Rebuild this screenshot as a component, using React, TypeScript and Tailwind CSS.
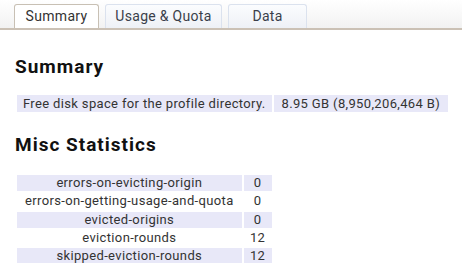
const stats = [
  { name: "errors-on-evicting-origin", value: "0" },
  { name: "errors-on-getting-usage-and-quota", value: "0" },
  { name: "evicted-origins", value: "0" },
  { name: "eviction-rounds", value: "12" },
  { name: "skipped-eviction-rounds", value: "12" },
];

const Tab = ({ label, active, width }: { label: string; active?: boolean; width: string }) => {
  return (
    <div
      className={
        "flex h-[24px] items-center justify-center rounded-t-[3px] border border-b-0 text-[14px] tracking-[0.3px] " +
        width +
        (active
          ? " border-[#c8c0b4] bg-white text-[#333]"
          : " border-[#dbe2ee] bg-gradient-to-b from-[#fbfcfe] to-[#eef1f6] text-[#3a3f4a]")
      }
    >
      {label}
    </div>
  );
};

export default function App() {
  return (
    <div
      className="h-[263px] w-[462px] overflow-hidden bg-white text-[#222]"
      style={{ fontFamily: "Roboto, 'Liberation Sans', sans-serif" }}
    >
      <div className="flex h-[30px] items-end gap-[6px] border-b-2 border-[#cbc1b5] bg-gradient-to-b from-white to-[#f2f2f2] pl-[14px]">
        <Tab label="Summary" active width="w-[85px]" />
        <Tab label="Usage & Quota" width="w-[117px]" />
        <Tab label="Data" width="w-[79px]" />
      </div>
      <div className="pl-[15px]">
        <h2 className="mt-[26px] text-[19px] font-bold leading-[22px] tracking-[1px] text-[#111]">Summary</h2>
        <table className="mt-[15px] border-separate border-spacing-[2px] text-[13px] leading-[15px] tracking-[0.35px] text-[#333]">
          <tbody>
            <tr>
              <td className="bg-[#e8e8f8] px-[6px] py-[1px]">Free disk space for the profile directory.</td>
              <td className="bg-[#e8e8f8] px-[8px] py-[1px]">8.95 GB (8,950,206,464 B)</td>
            </tr>
          </tbody>
        </table>
        <h2 className="mt-[20px] text-[19px] font-bold leading-[22px] tracking-[1px] text-[#111]">Misc Statistics</h2>
        <table className="mt-[17px] border-separate border-spacing-[2px] text-[13px] leading-[14.3px] tracking-[0.35px] text-[#333]">
          <tbody>
            {stats.map((s, i) => (
              <tr key={s.name}>
                <td className={"px-[8px] py-[1px] text-center " + (i % 2 === 0 ? "bg-[#e8e8f8]" : "")}>{s.name}</td>
                <td className={"w-[28px] px-[6px] py-[1px] text-center " + (i % 2 === 0 ? "bg-[#e8e8f8]" : "")}>{s.value}</td>
              </tr>
            ))}
          </tbody>
        </table>
      </div>
    </div>
  );
}
